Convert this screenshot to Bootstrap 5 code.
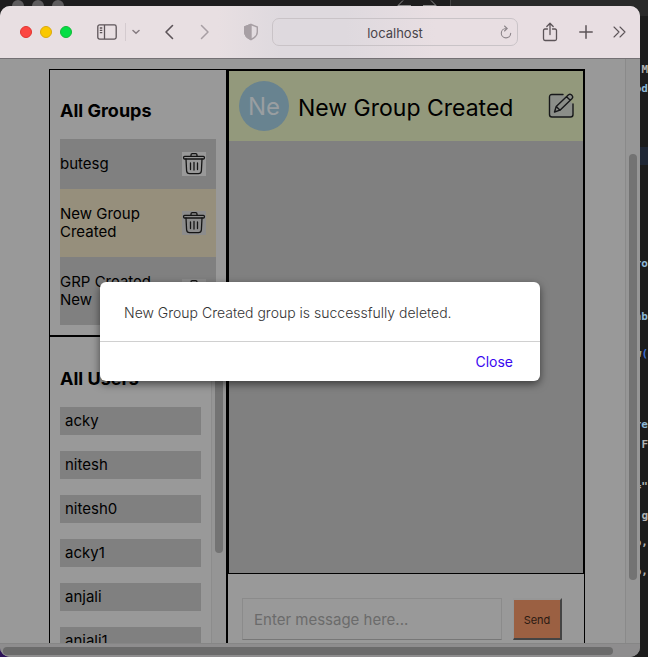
<!DOCTYPE html>
<html lang="en">
<head>
<meta charset="utf-8">
<meta name="viewport" content="width=device-width, initial-scale=1">
<title>Group chat</title>
<link href="https://cdn.jsdelivr.net/npm/bootstrap@5.3.0/dist/css/bootstrap.min.css" rel="stylesheet">
<style>
body { font-family: Inter, "Liberation Sans", sans-serif; font-size: 15px; line-height: 18px; color: #000; background: #1c1c1c; }
button { font-family: inherit; }
.desk { height: 100vh; padding: 6px 8px 0 0; }
.desk-back { position: absolute; inset: 0; z-index: 0; }
.back-bar { height: 16px; }
.back-left { width: 451px; background: #1e1d1e; border-right: 1px solid #454545; padding-left: 12px; }
.back-right { background: #292929; }
.back-dot { width: 12px; height: 12px; border-radius: 50%; background: #5e5c5e; margin-right: 8px; }
.back-nav { margin-left: auto; margin-right: 12px; }
.code-strip { display: grid; grid-template-rows: 19px 67px 108px 53px 37px 71px 20px 42px 29px 27px 29px 18px; align-items: start; padding-top: 45px; width: 20px; margin-left: auto; overflow: hidden; text-align: right; white-space: nowrap; font: bold 11px/18px "DejaVu Sans Mono", monospace; color: #8fb9d6; }
.code-strip .plain { color: #b4b4b4; }
.code-strip .call { color: #a9b08a; }
.code-strip .paren { color: #3d6fd0; }
.code-strip .hl { background: #1f2735; }
.corner { position: absolute; left: 0; bottom: 0; width: 14px; height: 14px; background: #2c1258; }

.win { position: relative; z-index: 1; border-radius: 10px; overflow: hidden; background: #999; }
.toolbar { height: 53px; flex: none; padding: 0 14px 0 20px; background: linear-gradient(90deg, #e8dfe2 0 34%, #ded9de 44% 54%, #e8dee2 68%); border-bottom: 1px solid #747074; }
.tl { width: 12px; height: 12px; border-radius: 50%; border: 1px solid; padding: 0; margin-right: 8px; }
.tl-r { background: #fc4642; border-color: #e2332f; }
.tl-y { background: #fac800; border-color: #dba90c; }
.tl-g { background: #04de45; border-color: #11b937; }
.tb { border: 0; background: none; padding: 0; display: flex; color: #5c5458; }
.tb.dim { color: #a79fa4; }
.tb-side { margin-left: 17px; }
.tb-fwd { margin-left: 26px; }
.tb-shield { margin-left: 33px; }
.tb-sep { width: 1px; height: 18px; background: #d4cbcf; margin: 0 6px 0 8px; }
.address { flex: 1; height: 28px; border: 1px solid #c9c3c7; border-radius: 7px; margin: 0 23px 0 13px; padding: 0 5px 0 17px; }
.address input { flex: 1; min-width: 0; border: 0; outline: 0; background: none; text-align: center; font-size: 13px; line-height: 18px; color: #48444a; padding: 1px 0 0; }

.page { position: relative; flex: 1; min-height: 0; }
.content { flex: 1; min-width: 0; padding: 10px 40px 0 49px; overflow: hidden; }
.side { width: 178px; flex: none; }
.panel { border: 1px solid #000; padding: 10px; }
.panel-title { font-size: 18px; line-height: 22px; font-weight: 700; margin: 20px 0 17px; }
.group-row { background: #808080; padding: 16px 10px 16px 0; gap: 10px; }
.group-row.active { background: #968f7c; }
.trash { flex: none; width: 24px; height: 24px; margin: -3px 0; border: 0; padding: 0; background: #999; display: flex; color: #151515; }
.active .trash, .group-row:last-child .trash { background: #8c8c8c; }
.users { flex: 1; min-height: 0; padding: 11px 0 0 10px; border-bottom: 0; overflow: hidden; }
.user { background: #808080; padding: 5px; margin-bottom: 16px; }
.user-list { flex: 1; min-width: 0; padding-right: 10px; }
.track { width: 15px; flex: none; border-left: 1px solid #8c8c8c; background: #959595; margin-top: -11px; padding: 0 3px; }
.thumb { width: 8px; border-radius: 4px; background: #737373; }
.users .thumb { height: 216px; }

.main { border: 1px solid #000; border-bottom: 0; flex: 1; min-width: 0; }
.chat { border: 1px solid #000; background: #808080; flex: 1; min-height: 0; }
.chat-head { height: 70px; padding: 10px 9px 10px 10px; background: #93997c; }
.avatar { width: 50px; height: 50px; border-radius: 50%; background: #688390; color: #999ea1; font-size: 24px; padding-top: 2px; margin-right: 9px; }
.chat-title { font-size: 23px; line-height: 30px; font-weight: 400; margin: 3px 0 0; }
.compose { flex: none; padding: 24px 22px 3px 14px; gap: 11px; }
.msg { flex: 1; min-width: 0; height: 42px; padding: 0 11px; border: 1px solid #8b8b8b; border-bottom-color: #777; background: transparent; font-size: 15px; outline: 0; }
.msg::placeholder { color: #6b6b6b; opacity: 1; }
.send { width: 49px; height: 42px; padding: 2px 0 0; font-size: 11px; color: #2b1a13; background: #9b6042; border: 2px solid; border-color: #969696 #444 #444 #969696; border-left-width: 1px; }
.page-track { width: 15px; flex: none; border-left: 1px solid #8a8a8a; background: #969696; padding: 95px 3px 0; }
.page-track .thumb { height: 426px; }
.bottom-track { height: 14px; flex: none; padding: 3px 27px 3px 3px; border-top: 1px solid #868686; background: #8e8d8e; }
.bottom-track .thumb { width: 100%; height: 8px; background: #6b6b6b; }

.overlay { position: absolute; inset: 0; padding: 223px 16px 0; z-index: 5; }
.dialog { max-width: 440px; background: #fff; border-radius: 6px; box-shadow: 0 3px 8px rgba(0,0,0,.55); }
.dialog p { margin: 0; padding: 22px 24px 19px; font-size: 14px; font-weight: 300; color: #333; }
.dialog-foot { border-top: 1px solid #d0d0d0; padding: 2px 18px 1px; }
.close-btn { border: 0; background: none; height: 36px; padding: 0 9px; font-size: 14px; font-weight: 400; color: #3a08f0; }
</style>
<script src="https://cdn.jsdelivr.net/npm/bootstrap@5.3.0/dist/js/bootstrap.bundle.min.js"></script>
</head>
<body class="overflow-hidden">
<svg class="d-none" xmlns="http://www.w3.org/2000/svg">
  <symbol id="trash" viewBox="0 0 24 24"><g fill="none" stroke="currentColor" stroke-width="1.3" stroke-linejoin="round" stroke-linecap="round"><rect x="1.6" y="4.3" width="20.8" height="2.7" rx="1"/><path d="M9 4.200V3Q9 1.600 10.300 1.600h3.400Q15 1.600 15 3v1.200M4 7l.6 11.800Q4.800 21.700 7.600 21.700h8.800q2.800 0 3-2.900L20 7M8.500 11v6.500M12 10.500v7.500M15.500 11v6.500"/></g></symbol>
</svg>
<div class="desk d-flex flex-column position-relative">
  <div class="desk-back overflow-hidden" aria-hidden="true">
    <div class="back-bar d-flex">
      <div class="back-left d-flex">
        <span class="back-dot"></span><span class="back-dot"></span><span class="back-dot"></span>
        <svg class="back-nav" width="42" height="12" fill="none" stroke="#8a8a8a"><path d="M15 5.500H2M7 .5l-5 5 5 5M27 5.500h13M35 .5l5 5-5 5"/></svg>
      </div>
      <div class="back-right flex-grow-1"></div>
    </div>
    <div class="code-strip">
      <div class="plain">M</div>
      <div>od</div>
      <div class="hl">&nbsp;</div>
      <div>ro</div>
      <div>nb</div>
      <div class="call">w<span class="paren">(</span></div>
      <div>re</div>
      <div class="plain">F</div>
      <div class="plain">="</div>
      <div class="plain">g</div>
      <div class="plain">o,</div>
      <div class="plain">o,</div>
    </div>
    <div class="corner"></div>
  </div>

  <div class="win d-flex flex-column flex-grow-1">
    <header class="toolbar d-flex align-items-center">
      <button class="tl tl-r" aria-label="Close window"></button>
      <button class="tl tl-y" aria-label="Minimize"></button>
      <button class="tl tl-g" aria-label="Zoom"></button>
      <button class="tb tb-side" aria-label="Sidebar"><svg width="20" height="16" fill="none" stroke="currentColor" stroke-width="1.300"><rect x=".8" y=".9" width="18.400" height="14.200" rx="1.800"/><path d="M7.500 1v14M2.800 4h2.500M2.800 6.300h2.500M2.800 8.600h2.500" /></svg></button>
      <span class="tb-sep"></span>
      <button class="tb" aria-label="Tab groups"><svg width="8" height="6" fill="none" stroke="#857c81" stroke-width="1.500" stroke-linecap="round"><path d="M1 1.500l3 2.700 3-2.700"/></svg></button>
      <button class="tb ms-4" aria-label="Back"><svg width="10" height="16" fill="none" stroke="currentColor" stroke-width="1.600" stroke-linecap="round" stroke-linejoin="round"><path d="M8.500 1.500L2 8l6.500 6.500"/></svg></button>
      <button class="tb dim tb-fwd" aria-label="Forward"><svg width="10" height="16" fill="none" stroke="currentColor" stroke-width="1.500" stroke-linecap="round" stroke-linejoin="round"><path d="M1.500 1.500L8 8l-6.500 6.500"/></svg></button>
      <button class="tb dim tb-shield" aria-label="Privacy report"><svg width="16" height="18" fill="none" stroke="currentColor" stroke-width="1.400" stroke-linejoin="round"><path d="M8 1.500L14.300 4v5c0 3.800-3 6-6.300 7.500C4.700 15 1.700 12.800 1.700 9V4z"/><path fill="currentColor" d="M8 1.500v15C4.700 15 1.700 12.800 1.700 9V4z"/></svg></button>
      <div class="address d-flex align-items-center">
        <input type="text" value="localhost" aria-label="Address">
        <button class="tb" aria-label="Reload"><svg width="12" height="14" fill="none" stroke="#8d868b" stroke-width="1.100" stroke-linecap="round"><path d="M6.500 3.500H6a4.700 4.700 0 1 0 4.700 4.800M4.500 1l2.700 2.500L4.500 6"/></svg></button>
      </div>
      <button class="tb" aria-label="Share"><svg width="18" height="20" fill="none" stroke="currentColor" stroke-width="1.300" stroke-linecap="round" stroke-linejoin="round"><path d="M6.500 7H4Q2.500 7 2.500 8.500v8Q2.500 18.500 4 18.500h10q1.500 0 1.500-1.500V8.500Q15.500 7 14 7h-2.500M9 12.500V1.500M5.800 4.500L9 1.300l3.200 3.200"/></svg></button>
      <button class="tb ms-3 ps-1" aria-label="New tab"><svg width="14" height="14" stroke="currentColor" stroke-width="1.500" stroke-linecap="round"><path d="M7 .8v12.400M.8 7h12.400"/></svg></button>
      <button class="tb ms-3 ps-1" aria-label="More"><svg width="13" height="12" fill="none" stroke="currentColor" stroke-width="1.100" stroke-linecap="round" stroke-linejoin="round"><path d="M1 1l5 5-5 5M7 1l5 5-5 5"/></svg></button>
    </header>

    <div class="page d-flex">
      <div class="d-flex flex-column flex-grow-1 overflow-hidden">
        <main class="content d-flex">
          <div class="side d-flex flex-column">
            <section class="panel">
              <h2 class="panel-title">All Groups</h2>
              <div class="group-row d-flex align-items-center justify-content-between"><span>butesg</span><button class="trash" aria-label="Delete butesg"><svg width="24" height="24"><use href="#trash"/></svg></button></div>
              <div class="group-row active d-flex align-items-center justify-content-between"><span>New Group Created</span><button class="trash" aria-label="Delete New Group Created"><svg width="24" height="24"><use href="#trash"/></svg></button></div>
              <div class="group-row d-flex align-items-center justify-content-between"><span>GRP Created New</span><button class="trash" aria-label="Delete GRP Created New"><svg width="24" height="24"><use href="#trash"/></svg></button></div>
            </section>
            <section class="panel users d-flex">
              <div class="user-list">
                <h2 class="panel-title">All Users</h2>
                <div class="user">acky</div>
                <div class="user">nitesh</div>
                <div class="user">nitesh0</div>
                <div class="user">acky1</div>
                <div class="user">anjali</div>
                <div class="user">anjali1</div>
              </div>
              <div class="track"><div class="thumb"></div></div>
            </section>
          </div>
          <section class="main d-flex flex-column">
            <div class="chat">
              <div class="chat-head d-flex align-items-center">
                <span class="avatar d-flex align-items-center justify-content-center flex-shrink-0">Ne</span>
                <h1 class="chat-title flex-grow-1 text-nowrap">New Group Created</h1>
                <button class="tb text-black" aria-label="Edit group"><svg width="26" height="26" fill="none" stroke="#17181a" stroke-width="1.400" stroke-linejoin="round" stroke-linecap="round"><path fill="#8b8e89" d="M15 1.500H4Q1.500 1.500 1.500 4v17.500Q1.500 24 4 24h18.500q2.500 0 2.500-2.500V11"/><path fill="#8b8e89" d="M6.500 19l1.700-5.500L20.500 1.800q1.500-1.200 2.800 0l.8.800q1.200 1.300 0 2.800L12 17.200zM8.200 13.500l3.800 3.700M18.500 3.700l3.800 3.600"/></svg></button>
              </div>
            </div>
            <form class="compose d-flex" onsubmit="return false">
              <input class="msg" type="text" placeholder="Enter message here..." aria-label="Message">
              <button class="send" type="submit">Send</button>
            </form>
          </section>
        </main>
      </div>
      <div class="page-track"><div class="thumb"></div></div>
      <div class="overlay">
        <div class="dialog mx-auto" role="dialog" aria-label="Notification">
          <p>New Group Created group is successfully deleted.</p>
          <div class="dialog-foot text-end"><button class="close-btn">Close</button></div>
        </div>
      </div>
    </div>
    <div class="bottom-track"><div class="thumb"></div></div>
  </div>
</div>
</body>
</html>
